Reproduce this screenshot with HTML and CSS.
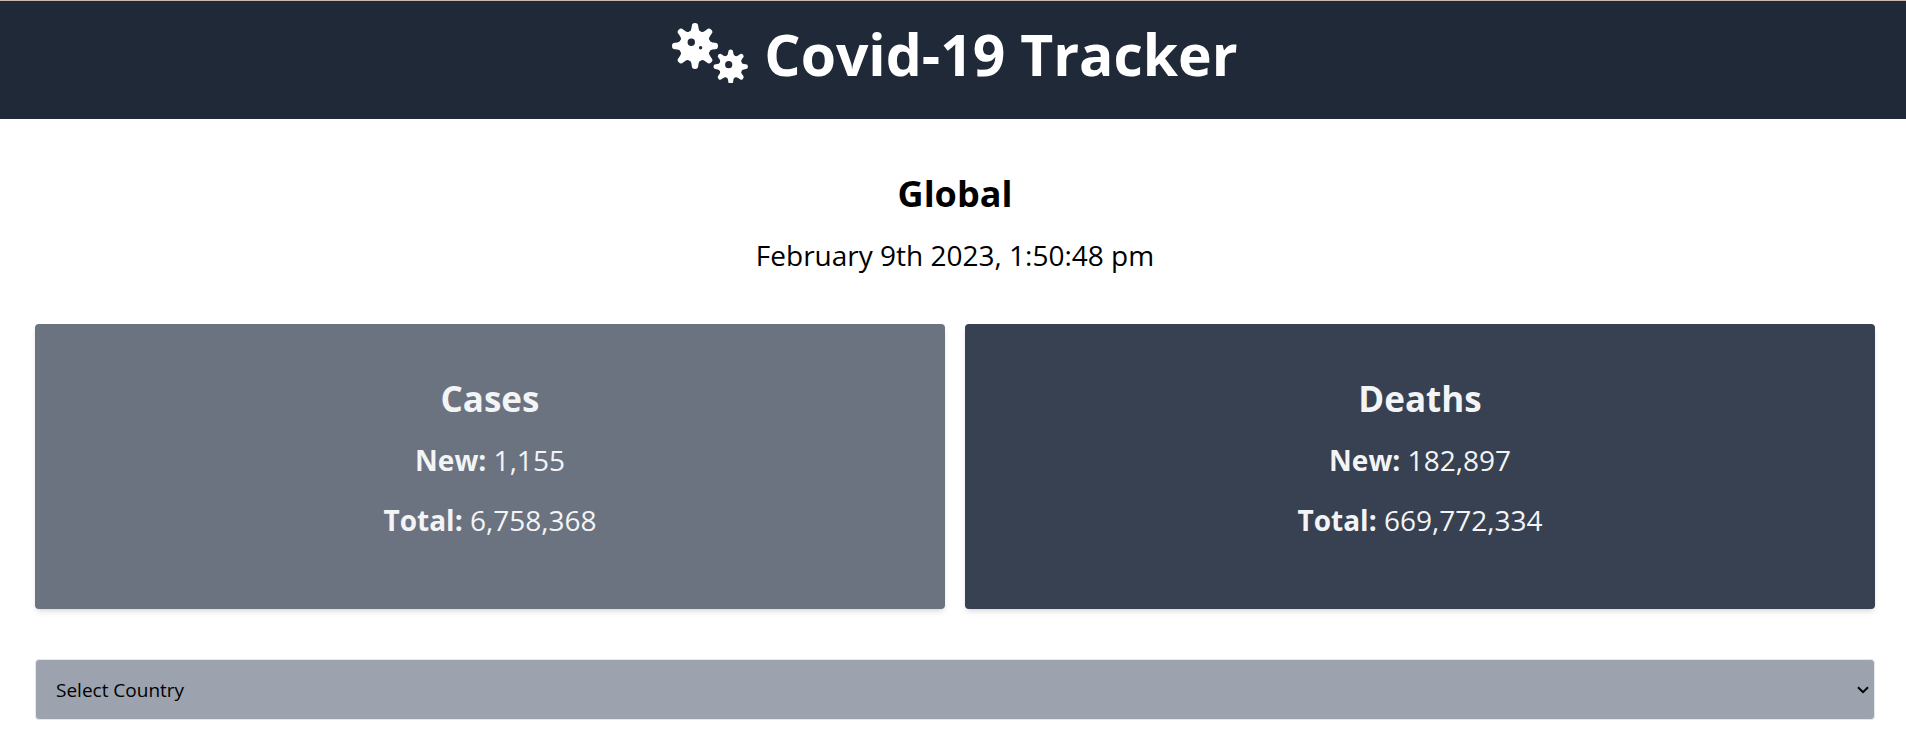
FILE: index.html
```html
<!DOCTYPE html>
<html lang="en">
<head>
<meta charset="utf-8">
<title>Covid-19 Tracker</title>
<link rel="stylesheet" href="styles.css">
</head>
<body>
<header class="header">
  <h1 class="title">
    <svg class="logo" viewBox="0 0 76 60" aria-hidden="true">
      <defs>
        <path id="tooth" d="M0 0L-5.9 -14.2Q-3.9 -15 -3.6 -17.5L-3.2 -20A3.2 3 0 0 1 3.2 -20L3.6 -17.5Q3.9 -15 5.9 -14.2Z"/>
        <g id="gear">
          <circle r="15.4"/>
          <use href="#tooth"/>
          <use href="#tooth" transform="rotate(45)"/>
          <use href="#tooth" transform="rotate(90)"/>
          <use href="#tooth" transform="rotate(135)"/>
          <use href="#tooth" transform="rotate(180)"/>
          <use href="#tooth" transform="rotate(225)"/>
          <use href="#tooth" transform="rotate(270)"/>
          <use href="#tooth" transform="rotate(315)"/>
        </g>
      </defs>
      <g class="gears">
        <use href="#gear" transform="translate(23 23)"/>
        <use href="#gear" transform="translate(58.7 43.7) scale(.75)"/>
      </g>
      <g class="holes">
        <circle cx="19.3" cy="19.3" r="3.7"/>
        <circle cx="28.6" cy="24.8" r="1.7"/>
        <circle cx="56.7" cy="41.7" r="3.6"/>
      </g>
    </svg>
    <span>Covid-19 Tracker</span>
  </h1>
</header>
<main class="main">
  <section class="summary">
    <h2 class="heading">Global</h2>
    <p class="date">February 9th 2023, 1:50:48 pm</p>
  </section>
  <section class="cards">
    <article class="card card-cases">
      <h2 class="heading">Cases</h2>
      <p class="stat"><strong>New:</strong> 1,155</p>
      <p class="stat"><strong>Total:</strong> 6,758,368</p>
    </article>
    <article class="card card-deaths">
      <h2 class="heading">Deaths</h2>
      <p class="stat"><strong>New:</strong> 182,897</p>
      <p class="stat"><strong>Total:</strong> 669,772,334</p>
    </article>
  </section>
  <div class="picker">
    <select class="select" aria-label="Select Country">
      <option>Select Country</option>
    </select>
    <svg class="chevron" viewBox="0 0 12 8" aria-hidden="true"><path d="M1 1.2L6 6.2L11 1.2"/></svg>
  </div>
</main>
</body>
</html>
```
FILE: styles.css
```css
* {
  box-sizing: border-box;
  margin: 0;
}

body {
  background: #fff;
  color: #000;
  font-family: "Segoe UI", "Open Sans", "Noto Sans", sans-serif;
}

.header {
  padding: 22px 0 34px 4px;
  border-top: 1px solid #c8b8ae;
  background: #1f2937;
  color: #fff;
}

.title {
  display: flex;
  justify-content: center;
  gap: 16px;
  font-size: 57px;
  line-height: 62px;
}

.logo {
  width: 76px;
  height: 60px;
}

.gears {
  fill: #fff;
}

.holes {
  fill: #1f2937;
}

.main {
  padding: 55px 31px 24px 35px;
}

.summary {
  text-align: center;
}

.heading {
  margin-bottom: 23px;
  font-size: 36px;
  line-height: 40px;
}

.date,
.stat {
  font-size: 28px;
  line-height: 36px;
}

.cards {
  display: grid;
  grid-template-columns: 1fr 1fr;
  gap: 20px;
  margin-top: 51px;
}

.card {
  padding: 55px 48px 47px;
  border-radius: 4px;
  box-shadow: 0 4px 6px -1px rgba(0, 0, 0, 0.1), 0 2px 4px -2px rgba(0, 0, 0, 0.1);
  color: #f3f4f6;
  text-align: center;
}

.card .heading {
  font-size: 35px;
}

.card-cases {
  background: #6b7280;
}

.card-deaths {
  background: #374151;
}

.stat {
  margin-bottom: 24px;
}

.picker {
  position: relative;
  margin-top: 50px;
}

.select {
  display: block;
  width: 100%;
  padding: 16px 20px 15px;
  border: 1px solid #e5e7eb;
  border-radius: 4px;
  background: #9ca3af;
  color: #000;
  font: 19px/28px "Segoe UI", "Open Sans", "Noto Sans", sans-serif;
  appearance: none;
}

.chevron {
  position: absolute;
  top: 50%;
  right: 6px;
  width: 12px;
  height: 8px;
  transform: translateY(-50%);
  fill: none;
  stroke: #000;
  stroke-width: 2;
  pointer-events: none;
}
```
